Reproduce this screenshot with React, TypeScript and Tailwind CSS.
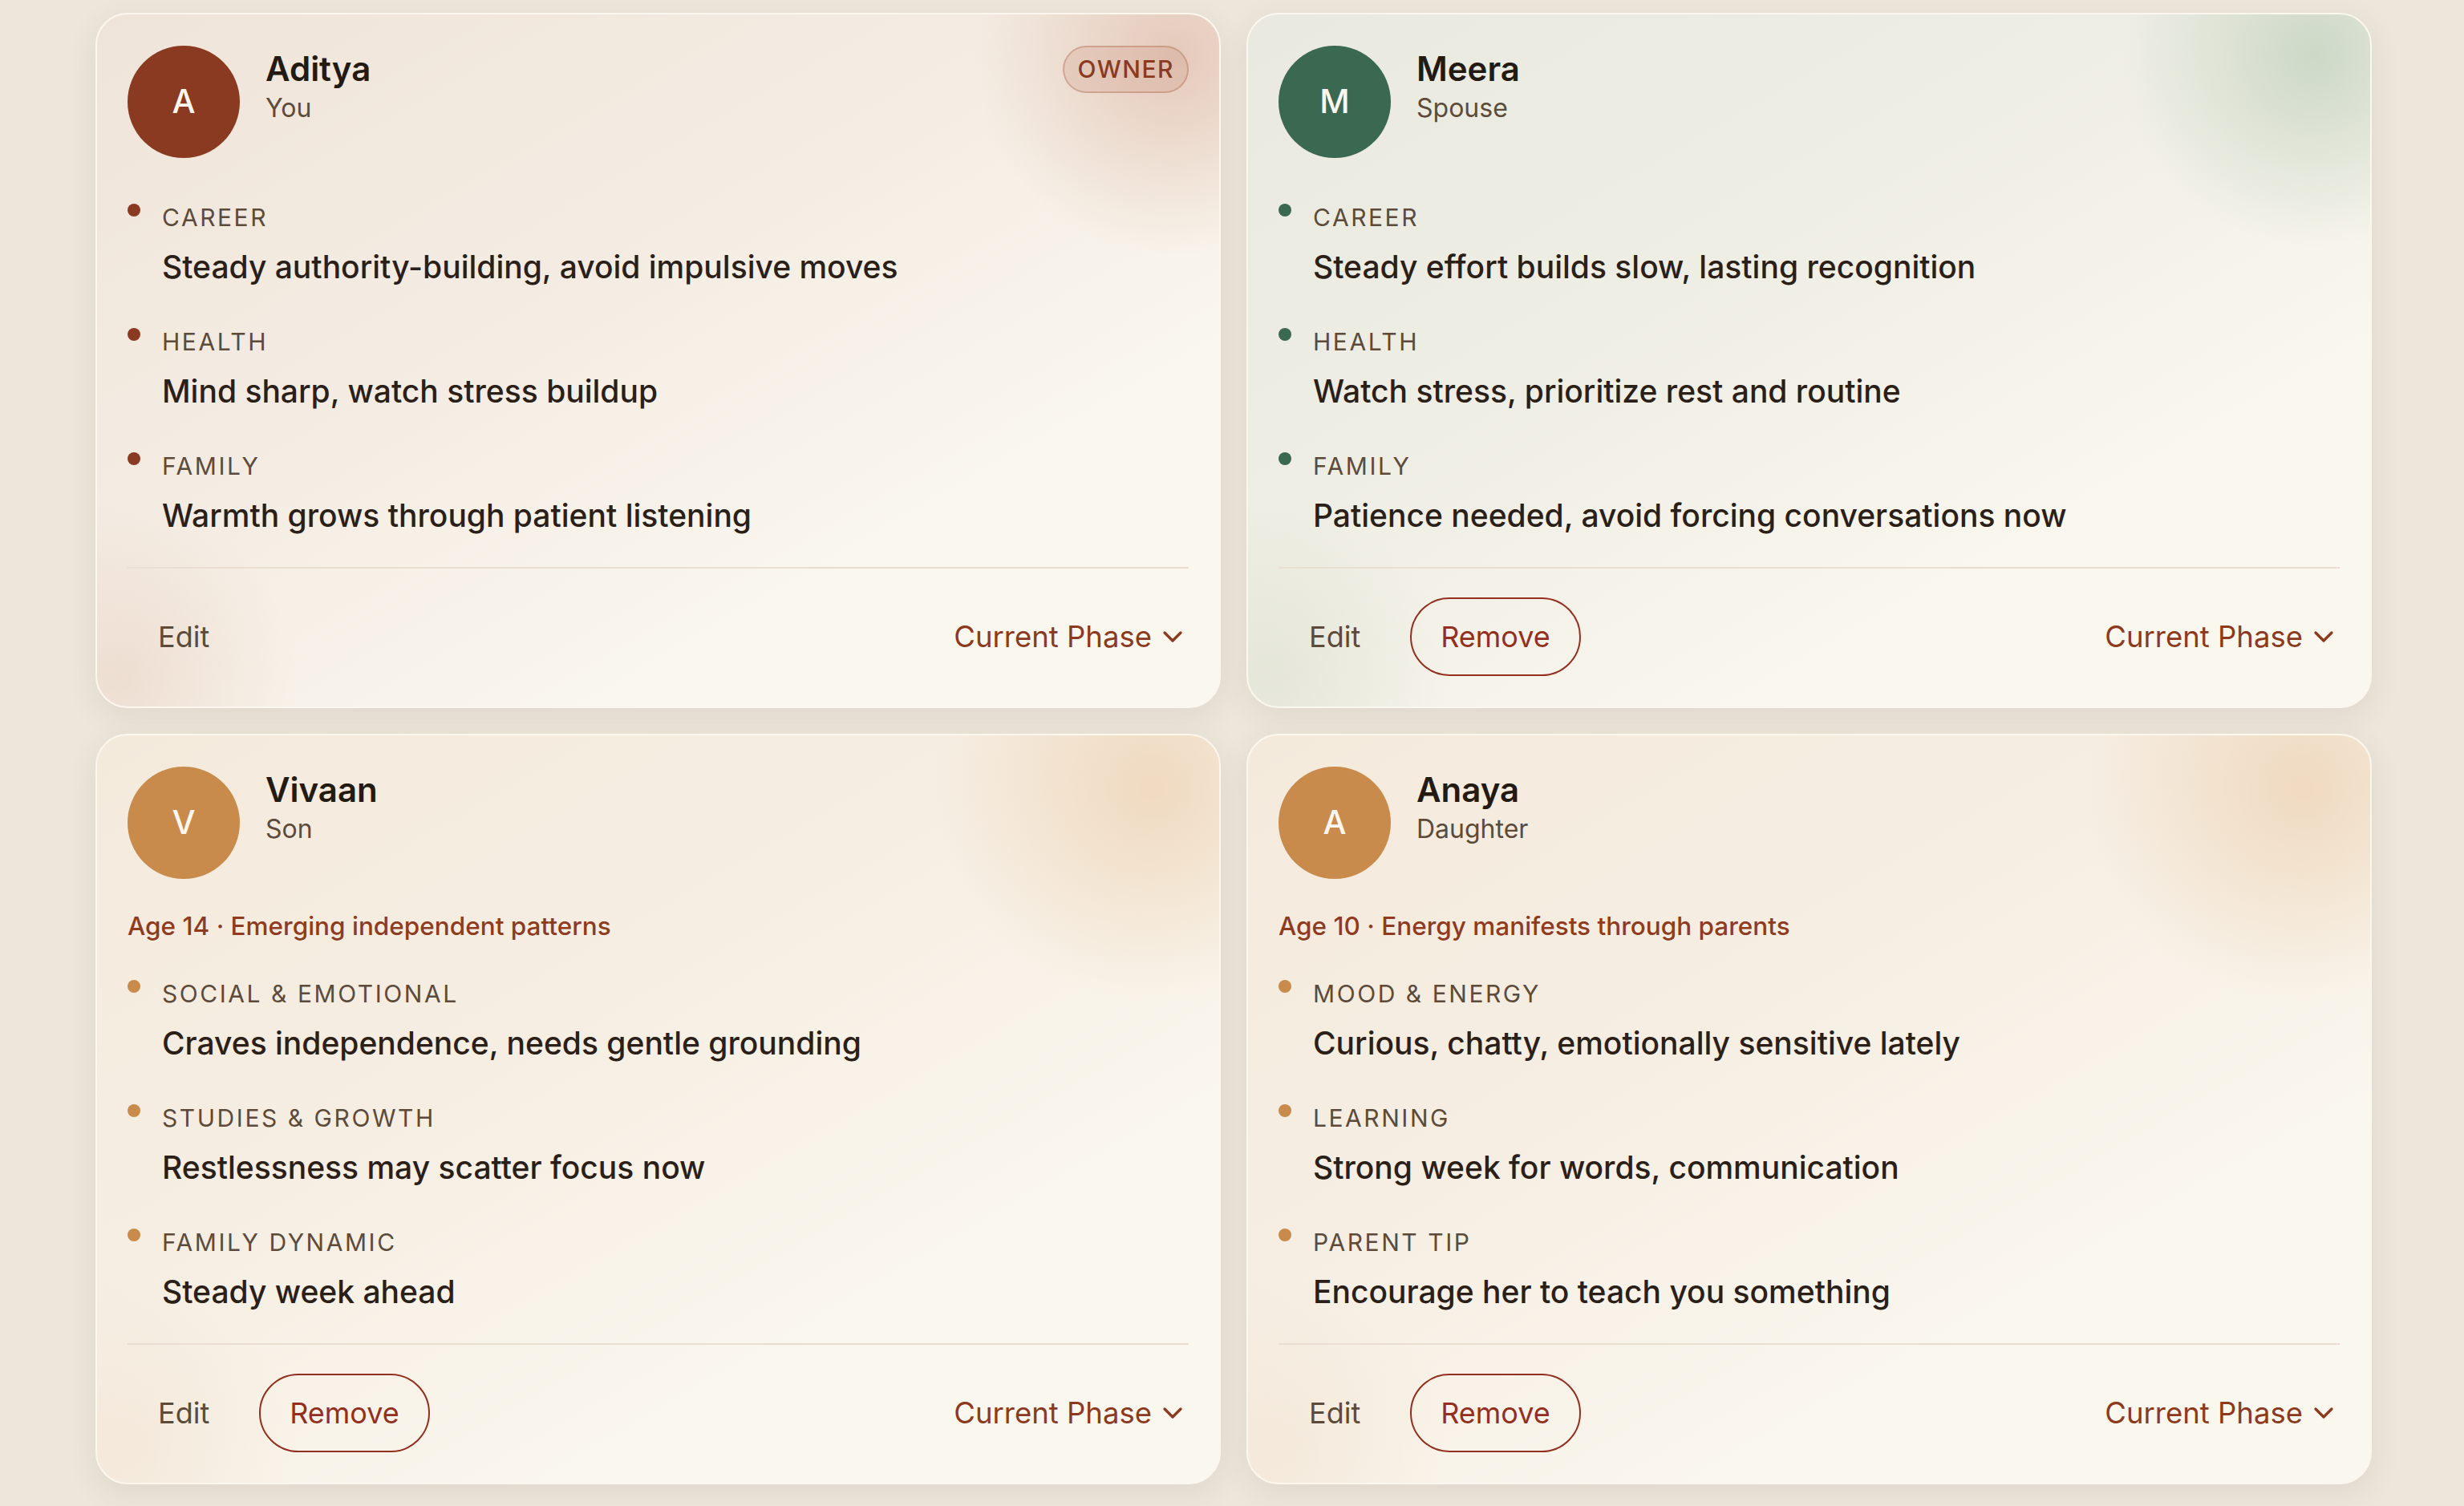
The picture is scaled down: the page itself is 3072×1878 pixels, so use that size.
import { ChevronDown } from 'lucide-react';

type Tone = 'rust' | 'green' | 'amber';

interface Insight {
  label: string;
  text: string;
}

interface Member {
  name: string;
  relation: string;
  initial: string;
  tone: Tone;
  owner?: boolean;
  removable?: boolean;
  age?: string;
  items: Insight[];
}

const TONES: Record<Tone, { avatar: string; dot: string; card: string }> = {
  rust: {
    avatar: 'bg-[#8a3a20]',
    dot: 'bg-[#8a3a20]',
    card: 'bg-[radial-gradient(circle_at_96%_6%,rgba(214,170,150,0.55),rgba(214,170,150,0)_250px),radial-gradient(circle_at_2%_96%,rgba(228,200,184,0.45),rgba(228,200,184,0)_220px),linear-gradient(150deg,#efe4d9_0%,#f4ece3_40%,#faf7ee_75%)]',
  },
  green: {
    avatar: 'bg-[#3b6850]',
    dot: 'bg-[#3b6850]',
    card: 'bg-[radial-gradient(circle_at_95%_6%,rgba(180,200,178,0.6),rgba(180,200,178,0)_240px),radial-gradient(circle_at_2%_96%,rgba(212,218,200,0.45),rgba(212,218,200,0)_220px),linear-gradient(150deg,#e9e9df_0%,#efeee4_40%,#faf7ee_75%)]',
  },
  amber: {
    avatar: 'bg-[#c98b4b]',
    dot: 'bg-[#c98b4b]',
    card: 'bg-[radial-gradient(circle_at_94%_7%,rgba(236,208,176,0.7),rgba(236,208,176,0)_270px),radial-gradient(circle_at_2%_96%,rgba(240,222,202,0.45),rgba(240,222,202,0)_220px),linear-gradient(150deg,#f4eadc_0%,#f6eee3_40%,#faf7ee_75%)]',
  },
};

const MEMBERS: Member[] = [
  {
    name: 'Aditya',
    relation: 'You',
    initial: 'A',
    tone: 'rust',
    owner: true,
    items: [
      { label: 'Career', text: 'Steady authority-building, avoid impulsive moves' },
      { label: 'Health', text: 'Mind sharp, watch stress buildup' },
      { label: 'Family', text: 'Warmth grows through patient listening' },
    ],
  },
  {
    name: 'Meera',
    relation: 'Spouse',
    initial: 'M',
    tone: 'green',
    removable: true,
    items: [
      { label: 'Career', text: 'Steady effort builds slow, lasting recognition' },
      { label: 'Health', text: 'Watch stress, prioritize rest and routine' },
      { label: 'Family', text: 'Patience needed, avoid forcing conversations now' },
    ],
  },
  {
    name: 'Vivaan',
    relation: 'Son',
    initial: 'V',
    tone: 'amber',
    removable: true,
    age: 'Age 14 · Emerging independent patterns',
    items: [
      { label: 'Social & Emotional', text: 'Craves independence, needs gentle grounding' },
      { label: 'Studies & Growth', text: 'Restlessness may scatter focus now' },
      { label: 'Family Dynamic', text: 'Steady week ahead' },
    ],
  },
  {
    name: 'Anaya',
    relation: 'Daughter',
    initial: 'A',
    tone: 'amber',
    removable: true,
    age: 'Age 10 · Energy manifests through parents',
    items: [
      { label: 'Mood & Energy', text: 'Curious, chatty, emotionally sensitive lately' },
      { label: 'Learning', text: 'Strong week for words, communication' },
      { label: 'Parent Tip', text: 'Encourage her to teach you something' },
    ],
  },
];

function MemberCard({ m }: { m: Member }) {
  const tone = TONES[m.tone];
  return (
    <div
      className={`flex flex-col rounded-[40px] border-2 border-[#fbf7ee] px-[38px] pb-[38px] pt-[39px] shadow-[0_10px_36px_rgba(120,90,60,0.10)] ${tone.card}`}
    >
      {/* Header */}
      <div className="flex items-start justify-between">
        <div className="flex items-start gap-8">
          <div
            className={`flex h-[140px] w-[140px] shrink-0 items-center justify-center rounded-full text-[41px] font-medium text-[#fdf6ee] ${tone.avatar}`}
          >
            {m.initial}
          </div>
          <div className="pt-[3px]">
            <div className="text-[42px] font-semibold leading-[52px] text-[#231a12]">{m.name}</div>
            <div className="mt-[2px] text-[32px] leading-[42px] text-[#5c4b3b]">{m.relation}</div>
          </div>
        </div>
        {m.owner && (
          <span className="flex h-[59px] items-center rounded-full border-2 border-[rgba(170,95,70,0.35)] bg-[rgba(200,140,120,0.22)] px-[16px] text-[30px] font-medium tracking-[0.05em] text-[#8a3a1e]">
            OWNER
          </span>
        )}
      </div>

      {m.age && (
        <div className="mt-[37px] text-[31.5px] font-medium leading-[44px] text-[#8e3b1f]">{m.age}</div>
      )}

      {/* Insights */}
      <div className={`flex flex-col gap-[43px] ${m.age ? 'mt-[40px]' : 'mt-[52px]'}`}>
        {m.items.map(it => (
          <div key={it.label} className="flex items-start gap-[27px]">
            <span className={`mt-[5px] h-4 w-4 shrink-0 rounded-full ${tone.dot}`} />
            <div>
              <div className="text-[30px] uppercase leading-[44px] tracking-[0.085em] text-[#5c4b3b]">
                {it.label}
              </div>
              <div className="mt-3 text-[39px] font-medium leading-[56px] text-[#2a2018]">{it.text}</div>
            </div>
          </div>
        ))}
      </div>

      {/* Footer */}
      <div className="mt-[36px] flex items-center justify-between border-t-2 border-[#eaddd1] pt-[36px]">
        <div className="flex items-center gap-6">
          <button className="h-[98px] rounded-full border-2 border-transparent px-[36px] text-[36px] text-[#5c4b3b]">
            Edit
          </button>
          {m.removable && (
            <button className="h-[98px] rounded-full border-2 border-[#922f1f] px-[36px] text-[36px] text-[#922f1f]">
              Remove
            </button>
          )}
        </div>
        <button className="flex items-center gap-[6px] text-[36.5px] text-[#8b3a1e]">
          Current Phase
          <ChevronDown size={40} strokeWidth={2} />
        </button>
      </div>
    </div>
  );
}

export default function App() {
  return (
    <div className="min-h-screen bg-[#ece6db] pb-[32px] pl-[119px] pr-[115px] pt-[16px] font-[Inter,'Noto_Sans',sans-serif]">
      <div className="grid grid-cols-2 gap-8">
        {MEMBERS.map(m => (
          <MemberCard key={m.name} m={m} />
        ))}
      </div>
    </div>
  );
}
